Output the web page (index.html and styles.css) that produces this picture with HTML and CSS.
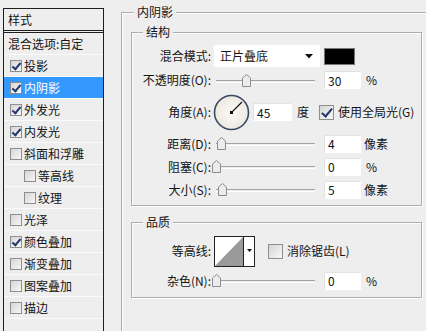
FILE: index.html
```html
<!DOCTYPE html>
<html lang="zh-CN">
<head>
    <meta charset="UTF-8">
    <title>图层样式</title>
    <link rel="stylesheet" href="styles.css">
</head>
<body>
    <div class="styles">
        <div class="styles-head">样式</div>
        <div class="style-item blend">混合选项:自定</div>
        <div class="style-item"><span class="cb on"></span>投影</div>
        <div class="style-item selected"><span class="cb on"></span>内阴影</div>
        <div class="style-item"><span class="cb on"></span>外发光</div>
        <div class="style-item"><span class="cb on"></span>内发光</div>
        <div class="style-item"><span class="cb"></span>斜面和浮雕</div>
        <div class="style-item sub"><span class="cb"></span>等高线</div>
        <div class="style-item sub"><span class="cb"></span>纹理</div>
        <div class="style-item"><span class="cb"></span>光泽</div>
        <div class="style-item"><span class="cb on"></span>颜色叠加</div>
        <div class="style-item"><span class="cb"></span>渐变叠加</div>
        <div class="style-item"><span class="cb"></span>图案叠加</div>
        <div class="style-item"><span class="cb"></span>描边</div>
    </div>

    <fieldset class="group outer">
        <legend>内阴影</legend>

        <fieldset class="group inner">
            <legend>结构</legend>

            <div class="row h24">
                <label class="lbl">混合模式:</label>
                <div class="select">正片叠底
                    <svg class="arrow" width="8" height="5" viewBox="0 0 8 5"><path d="M0 0H8L4 4.5Z" fill="#111"/></svg>
                </div>
                <span class="swatch"></span>
            </div>

            <div class="row h24">
                <label class="lbl">不透明度(O):</label>
                <div class="slider">
                    <svg class="thumb" style="left:30px" width="9" height="13" viewBox="0 0 9 13"><path d="M0.5 12.5V4L4.5 0.5L8.5 4V12.5Z" fill="#ececec" stroke="#8c8c8c"/></svg>
                </div>
                <input class="num" type="text" value="30">
                <span class="unit">%</span>
            </div>

            <div class="row h40">
                <label class="lbl">角度(A):</label>
                <svg class="dial" width="37" height="37" viewBox="0 0 37 37">
                    <defs>
                        <radialGradient id="dialbg" cx="0.5" cy="0.5" r="0.5">
                            <stop offset="0" stop-color="#fbfaf6"/>
                            <stop offset="1" stop-color="#ece9e0"/>
                        </radialGradient>
                    </defs>
                    <circle cx="18.5" cy="18.5" r="17" fill="url(#dialbg)" stroke="#3b4a62" stroke-width="1.6"/>
                    <line x1="18.5" y1="18.5" x2="29" y2="8" stroke="#111" stroke-width="1.1"/>
                    <rect x="17" y="17" width="3" height="3" fill="#111"/>
                </svg>
                <input class="num angle" type="text" value="45">
                <span class="unit">度</span>
                <span class="cb big on"></span>
                <span class="cb-text">使用全局光(G)</span>
            </div>

            <div class="row h23">
                <label class="lbl">距离(D):</label>
                <div class="slider">
                    <svg class="thumb" style="left:5px" width="9" height="13" viewBox="0 0 9 13"><path d="M0.5 12.5V4L4.5 0.5L8.5 4V12.5Z" fill="#ececec" stroke="#8c8c8c"/></svg>
                </div>
                <input class="num" type="text" value="4">
                <span class="unit px">像素</span>
            </div>

            <div class="row h23">
                <label class="lbl">阻塞(C):</label>
                <div class="slider">
                    <svg class="thumb" style="left:0px" width="9" height="13" viewBox="0 0 9 13"><path d="M0.5 12.5V4L4.5 0.5L8.5 4V12.5Z" fill="#ececec" stroke="#8c8c8c"/></svg>
                </div>
                <input class="num" type="text" value="0">
                <span class="unit">%</span>
            </div>

            <div class="row h23">
                <label class="lbl">大小(S):</label>
                <div class="slider">
                    <svg class="thumb" style="left:6px" width="9" height="13" viewBox="0 0 9 13"><path d="M0.5 12.5V4L4.5 0.5L8.5 4V12.5Z" fill="#ececec" stroke="#8c8c8c"/></svg>
                </div>
                <input class="num" type="text" value="5">
                <span class="unit px">像素</span>
            </div>
        </fieldset>

        <fieldset class="group inner quality">
            <legend>品质</legend>

            <div class="row h32">
                <label class="lbl">等高线:</label>
                <svg class="contour" width="41" height="31" viewBox="0 0 41 31">
                    <rect x="0.5" y="0.5" width="40" height="30" fill="#fff" stroke="#222"/>
                    <path d="M1 30L29 1V30Z" fill="#9a9a9a"/>
                    <line x1="29.5" y1="0.5" x2="29.5" y2="30.5" stroke="#222"/>
                    <path d="M33 13H38L35.5 16Z" fill="#111"/>
                </svg>
                <span class="cb big aa"></span>
                <span class="cb-text">消除锯齿(L)</span>
            </div>

            <div class="row h27">
                <label class="lbl">杂色(N):</label>
                <div class="slider">
                    <svg class="thumb" style="left:0px" width="9" height="13" viewBox="0 0 9 13"><path d="M0.5 12.5V4L4.5 0.5L8.5 4V12.5Z" fill="#ececec" stroke="#8c8c8c"/></svg>
                </div>
                <input class="num" type="text" value="0">
                <span class="unit">%</span>
            </div>
        </fieldset>
    </fieldset>
</body>
</html>
```

FILE: styles.css
```css
html {
    background-color: #eeeeee;
}
body {
    margin: 0;
    height: 331px;
    overflow: hidden;
    display: flex;
    align-items: flex-start;
    font-family: "Noto Sans CJK SC", "Liberation Sans", sans-serif;
    font-size: 12px;
    line-height: 14px;
    color: #141414;
}

/* left list, cut off by the window bottom */
.styles {
    margin: 8px 0 0 3px;
    width: 101px;
    height: 323px;
    box-sizing: border-box;
    border: 1px solid #1e1e1e;
    border-bottom: none;
    overflow: hidden;
    flex-shrink: 0;
}
.styles-head {
    height: 21px;
    line-height: 21px;
    padding-left: 4px;
    border-bottom: 3px double #1e1e1e;
}
.style-item {
    height: 21px;
    display: flex;
    align-items: center;
    padding-left: 6px;
    border-bottom: 1px solid #fbfbfb;
}
.style-item.blend {
    padding-left: 4px;
}
.style-item.sub {
    padding-left: 20px;
}
.style-item.selected {
    background-color: #3399ff;
    color: #fff;
}

.cb {
    position: relative;
    display: inline-block;
    width: 12px;
    height: 12px;
    box-sizing: border-box;
    border: 1px solid #8e8e8e;
    background: linear-gradient(135deg, #d6d6d6, #f7f7f7);
    margin-right: 2px;
    flex-shrink: 0;
}
.cb.on::after {
    content: "";
    position: absolute;
    left: 3px;
    top: 0px;
    width: 3px;
    height: 7px;
    border-right: 2px solid #24386e;
    border-bottom: 2px solid #24386e;
    transform: rotate(40deg);
}
.cb.big {
    width: 15px;
    height: 15px;
    margin-right: 4px;
}
.cb.big.on::after {
    left: 4px;
    top: 0px;
    width: 4px;
    height: 9px;
}

/* group boxes */
.group {
    margin: 0;
    border: 1px solid #adadad;
    box-shadow: inset 1px 1px 0 #fff, 1px 1px 0 #fff;
    min-width: 0;
}
.group legend {
    padding: 0 3px;
    background-color: #eeeeee;
    line-height: 14px;
}
.outer {
    margin: 5px 0 0 17px;
    width: 305px;
    height: 326px;
    box-sizing: border-box;
    padding: 6px 0 0 9px;
    border-right: none;
    border-bottom: none;
    box-shadow: inset 1px 1px 0 #fff;
    flex-shrink: 0;
}
.outer > legend {
    margin-left: 3px;
}
.inner {
    width: 291px;
    box-sizing: border-box;
    padding: 5px 0 4px 0;
}
.inner > legend {
    margin-left: 11px;
}
.quality {
    margin-top: 9px;
    padding: 6px 0 3px 0;
}

/* rows */
.row {
    display: flex;
    align-items: center;
}
.h24 { height: 24px; }
.h40 { height: 40px; }
.h23 { height: 23px; }
.h32 { height: 32px; }
.h27 { height: 27px; }

.lbl {
    width: 80px;
    box-sizing: border-box;
    padding-right: 1px;
    text-align: right;
    white-space: nowrap;
    flex-shrink: 0;
}

.select {
    position: relative;
    margin-left: 2px;
    width: 106px;
    height: 22px;
    line-height: 22px;
    box-sizing: border-box;
    padding-left: 6px;
    background-color: #fff;
}
.select .arrow {
    position: absolute;
    right: 7px;
    top: 9px;
}
.swatch {
    margin-left: 4px;
    width: 31px;
    height: 17px;
    box-sizing: border-box;
    background-color: #000;
    border: 1px solid #777;
}

.slider {
    position: relative;
    width: 103px;
    height: 13px;
    flex-shrink: 0;
}
.slider::before {
    content: "";
    position: absolute;
    left: 4px;
    right: 0;
    top: 6px;
    height: 1px;
    border-top: 1px solid #a3a3a3;
    border-bottom: 1px solid #fff;
}
.slider .thumb {
    position: absolute;
    top: 0;
}

.num {
    margin: 0 0 0 9px;
    width: 37px;
    height: 18px;
    box-sizing: border-box;
    padding: 0 0 0 3px;
    border: 1px solid #e2e2e2;
    border-right-color: #fff;
    border-bottom-color: #fff;
    background-color: #fff;
    font: inherit;
    color: #141414;
    outline: none;
}
.num.angle {
    margin-left: 3px;
    width: 39px;
}
.unit {
    margin-left: 5px;
    margin-right: 10px;
}
.unit.px {
    margin-left: 3px;
}

.dial {
    margin-left: 1px;
    flex-shrink: 0;
}

.contour {
    margin-left: 2px;
    flex-shrink: 0;
}
.cb.aa {
    margin-left: 13px;
}
```
